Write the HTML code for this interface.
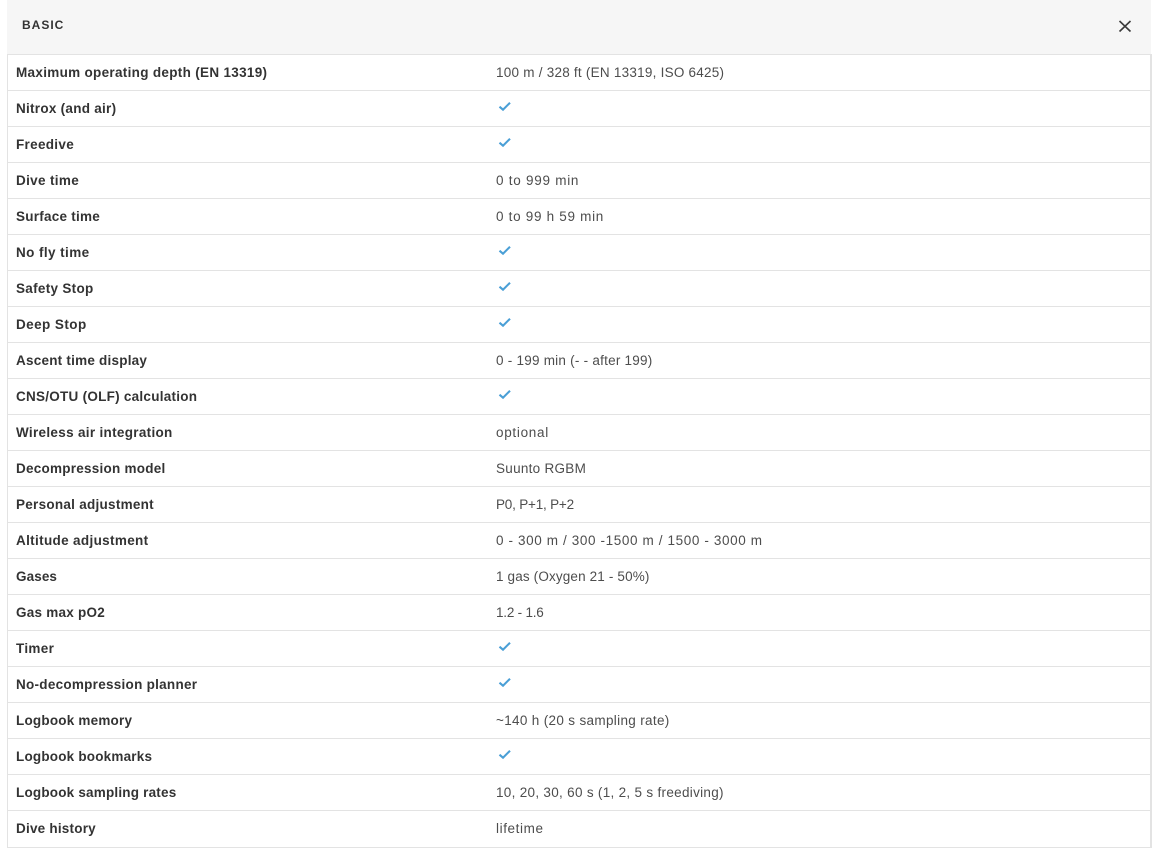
<!DOCTYPE html>
<html><head><meta charset="utf-8"><title>Basic</title>
<style>
html,body{margin:0;padding:0;background:#fff;width:1156px;height:854px;overflow:hidden}
body{font-family:"Liberation Sans",sans-serif;position:relative}
.hd{position:absolute;left:7px;top:0;width:1144px;height:54px;background:#f6f6f6}
.hd b{position:absolute;left:15px;top:18px;font-size:12px;line-height:15px;letter-spacing:1px;color:#333}
.x{position:absolute;left:1118px;top:19px}
.t{position:absolute;left:7px;top:54px;width:1142px;height:792px;border:1px solid #e3e3e3;border-width:1px 2px 1px 1px}
.r{position:absolute;left:0;width:100%;height:36px;border-bottom:1px solid #e3e3e3;box-sizing:border-box}
.r:last-child{border-bottom:0}
.k{position:absolute;left:8px;top:9px;font-size:13.500px;line-height:17px;font-weight:bold;color:#333;white-space:nowrap}
.v{position:absolute;left:488px;top:9px;font-size:13.500px;line-height:17px;color:#4d4d4d;white-space:nowrap}
.c{position:absolute;left:490px;top:9px}
</style></head><body>
<div class="hd"><b>BASIC</b></div>
<svg class="x" width="14" height="14" viewBox="0 0 14 14"><path d="M1.500 2L12.500 12.500M12.500 2L1.500 12.500" stroke="#3a3a3a" stroke-width="1.600" fill="none"/></svg>
<div class="t">
<div class="r" style="top:0"><span class="k" style="letter-spacing:.31px">Maximum operating depth (EN 13319)</span><span class="v" style="letter-spacing:.24px">100 m / 328 ft (EN 13319, ISO 6425)</span></div>
<div class="r" style="top:36px"><span class="k" style="letter-spacing:.27px">Nitrox (and air)</span><svg class="c" width="14" height="13" viewBox="0 0 14 13"><path d="M1.500 6.700L5 9.700L12 2.700" stroke="#4a9fd6" stroke-width="2.100" fill="none"/></svg></div>
<div class="r" style="top:72px"><span class="k" style="letter-spacing:.31px">Freedive</span><svg class="c" width="14" height="13" viewBox="0 0 14 13"><path d="M1.500 6.700L5 9.700L12 2.700" stroke="#4a9fd6" stroke-width="2.100" fill="none"/></svg></div>
<div class="r" style="top:108px"><span class="k" style="letter-spacing:.34px">Dive time</span><span class="v" style="letter-spacing:.74px">0 to 999 min</span></div>
<div class="r" style="top:144px"><span class="k" style="letter-spacing:.25px">Surface time</span><span class="v" style="letter-spacing:.7px">0 to 99 h 59 min</span></div>
<div class="r" style="top:180px"><span class="k" style="letter-spacing:.41px">No fly time</span><svg class="c" width="14" height="13" viewBox="0 0 14 13"><path d="M1.500 6.700L5 9.700L12 2.700" stroke="#4a9fd6" stroke-width="2.100" fill="none"/></svg></div>
<div class="r" style="top:216px"><span class="k" style="letter-spacing:.3px">Safety Stop</span><svg class="c" width="14" height="13" viewBox="0 0 14 13"><path d="M1.500 6.700L5 9.700L12 2.700" stroke="#4a9fd6" stroke-width="2.100" fill="none"/></svg></div>
<div class="r" style="top:252px"><span class="k" style="letter-spacing:.43px">Deep Stop</span><svg class="c" width="14" height="13" viewBox="0 0 14 13"><path d="M1.500 6.700L5 9.700L12 2.700" stroke="#4a9fd6" stroke-width="2.100" fill="none"/></svg></div>
<div class="r" style="top:288px"><span class="k" style="letter-spacing:.23px">Ascent time display</span><span class="v" style="letter-spacing:.24px">0 - 199 min (- - after 199)</span></div>
<div class="r" style="top:324px"><span class="k" style="letter-spacing:.26px">CNS/OTU (OLF) calculation</span><svg class="c" width="14" height="13" viewBox="0 0 14 13"><path d="M1.500 6.700L5 9.700L12 2.700" stroke="#4a9fd6" stroke-width="2.100" fill="none"/></svg></div>
<div class="r" style="top:360px"><span class="k" style="letter-spacing:.31px">Wireless air integration</span><span class="v" style="letter-spacing:.7px">optional</span></div>
<div class="r" style="top:396px"><span class="k" style="letter-spacing:.25px">Decompression model</span><span class="v" style="letter-spacing:.28px">Suunto RGBM</span></div>
<div class="r" style="top:432px"><span class="k" style="letter-spacing:.27px">Personal adjustment</span><span class="v" style="letter-spacing:-.2px">P0, P+1, P+2</span></div>
<div class="r" style="top:468px"><span class="k" style="letter-spacing:.34px">Altitude adjustment</span><span class="v" style="letter-spacing:.62px">0 - 300 m / 300 -1500 m / 1500 - 3000 m</span></div>
<div class="r" style="top:504px"><span class="k" style="letter-spacing:.1px">Gases</span><span class="v" style="letter-spacing:.15px">1 gas (Oxygen 21 - 50%)</span></div>
<div class="r" style="top:540px"><span class="k" style="letter-spacing:.25px">Gas max pO2</span><span class="v" style="letter-spacing:-.22px">1.2 - 1.6</span></div>
<div class="r" style="top:576px"><span class="k" style="letter-spacing:.33px">Timer</span><svg class="c" width="14" height="13" viewBox="0 0 14 13"><path d="M1.500 6.700L5 9.700L12 2.700" stroke="#4a9fd6" stroke-width="2.100" fill="none"/></svg></div>
<div class="r" style="top:612px"><span class="k" style="letter-spacing:.27px">No-decompression planner</span><svg class="c" width="14" height="13" viewBox="0 0 14 13"><path d="M1.500 6.700L5 9.700L12 2.700" stroke="#4a9fd6" stroke-width="2.100" fill="none"/></svg></div>
<div class="r" style="top:648px"><span class="k" style="letter-spacing:.21px">Logbook memory</span><span class="v" style="letter-spacing:.33px">~140 h (20 s sampling rate)</span></div>
<div class="r" style="top:684px"><span class="k" style="letter-spacing:.2px">Logbook bookmarks</span><svg class="c" width="14" height="13" viewBox="0 0 14 13"><path d="M1.500 6.700L5 9.700L12 2.700" stroke="#4a9fd6" stroke-width="2.100" fill="none"/></svg></div>
<div class="r" style="top:720px"><span class="k" style="letter-spacing:.2px">Logbook sampling rates</span><span class="v" style="letter-spacing:.3px">10, 20, 30, 60 s (1, 2, 5 s freediving)</span></div>
<div class="r" style="top:756px"><span class="k" style="letter-spacing:.22px">Dive history</span><span class="v" style="letter-spacing:.6px">lifetime</span></div>
</div>
</body></html>
